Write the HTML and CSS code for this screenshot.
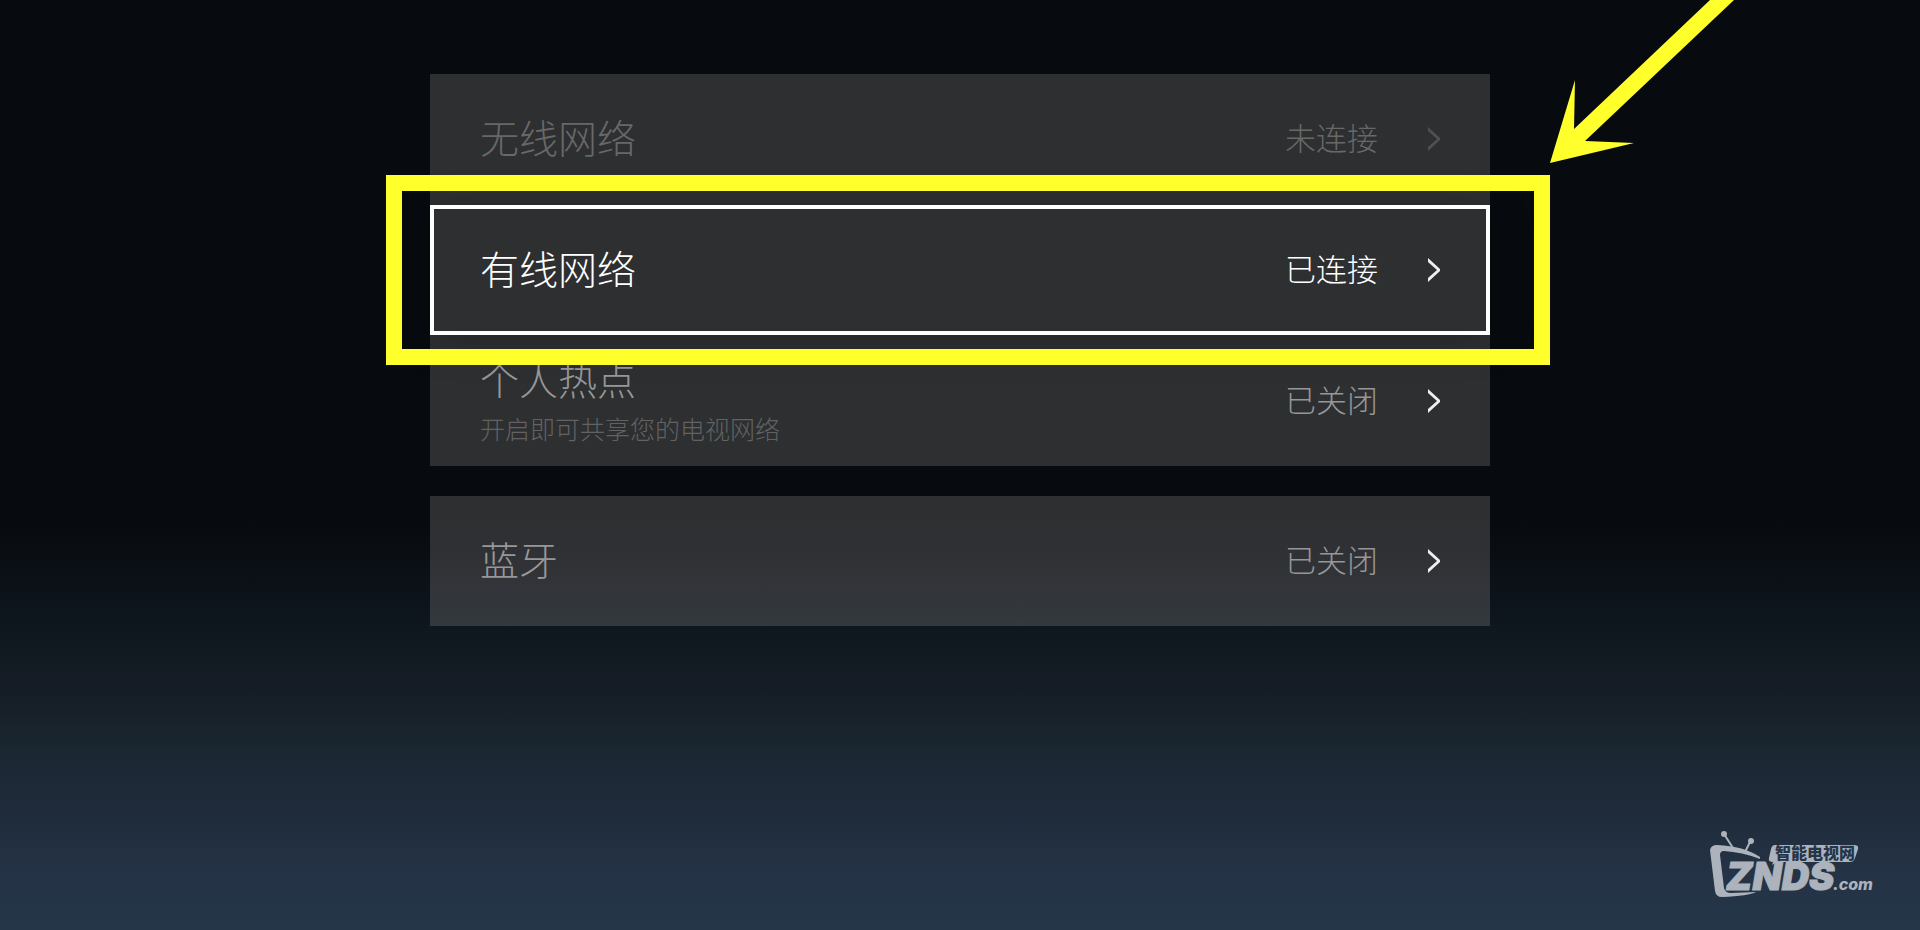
FILE: index.html
```html
<!DOCTYPE html>
<html lang="zh-CN">
<head>
<meta charset="utf-8">
<title>网络设置</title>
<link rel="stylesheet" href="styles.css">
</head>
<body>
<main class="settings">
  <section class="group">
    <button class="row row-disabled" type="button">
      <span class="title">无线网络</span>
      <span class="status">未连接</span>
      <svg class="chevron" viewBox="0 0 12 24" aria-hidden="true"><path d="M0 0L12 11V13L0 24V20L9 12L0 4Z"/></svg>
    </button>
    <button class="row row-focused" type="button">
      <span class="title">有线网络</span>
      <span class="status">已连接</span>
      <svg class="chevron" viewBox="0 0 12 24" aria-hidden="true"><path d="M0 0L12 11V13L0 24V20L9 12L0 4Z"/></svg>
      <span class="callout">
        <svg class="arrow" viewBox="0 0 184 163" aria-hidden="true"><path d="M0 163L25 80L24 129L160 0H184L35 141L84 143Z"/></svg>
      </span>
    </button>
    <button class="row" type="button">
      <span class="label">
        <span class="title">个人热点</span>
        <span class="hint">开启即可共享您的电视网络</span>
      </span>
      <span class="status">已关闭</span>
      <svg class="chevron" viewBox="0 0 12 24" aria-hidden="true"><path d="M0 0L12 11V13L0 24V20L9 12L0 4Z"/></svg>
    </button>
  </section>
  <section class="group">
    <button class="row" type="button">
      <span class="title">蓝牙</span>
      <span class="status">已关闭</span>
      <svg class="chevron" viewBox="0 0 12 24" aria-hidden="true"><path d="M0 0L12 11V13L0 24V20L9 12L0 4Z"/></svg>
    </button>
  </section>
</main>
<svg class="logo" viewBox="0 0 166 70" role="img" aria-label="智能电视网 ZNDS.com">
  <g class="logo-shape">
    <circle cx="14" cy="4" r="3"/>
    <circle cx="41" cy="11" r="3"/>
    <path d="M14 4L23 18M40 12L35 22" class="logo-line"/>
    <path fill-rule="evenodd" d="M0 20Q1 15 7 15Q34 16 50 27V29Q32 22 14 21Q10 21 10 25L14 58Q15 63 21 63L46 62Q39 66 12 67Q6 67 5 61Z"/>
    <path d="M65 15H144Q149 15 148 19L145 28Q144 32 140 32H67L62 35L63 32Q58 32 59 28L61 19Q62 15 65 15Z"/>
  </g>
  <text class="logo-badge" x="65" y="29">智能电视网</text>
  <text class="logo-name" x="16" y="60">ZNDS</text>
  <text class="logo-domain" x="123" y="60">.com</text>
</svg>
</body>
</html>
```
FILE: styles.css
```css
* {
  box-sizing: border-box;
}

body {
  margin: 0;
  min-height: 100vh;
  overflow: hidden;
  position: relative;
  font-family: "Noto Sans CJK SC", sans-serif;
  font-weight: 300;
  background: linear-gradient(#070b0f 0%, #070b0f 56%, #0c1118 63%, #0f181f 68%, #151c25 74%, #1a262f 80%, #1f2b3b 87%, #243345 94%, #253649 100%);
}

.settings {
  width: 1060px;
  max-width: 100%;
  margin: 0 auto;
  padding-top: 74px;
  display: flex;
  flex-direction: column;
  gap: 30px;
}

.group {
  display: flex;
  flex-direction: column;
  gap: 1px;
  background: rgba(255, 245, 238, 0.155);
}

.row {
  display: flex;
  align-items: center;
  width: 100%;
  min-height: 130px;
  padding: 0 50px;
  border: 0;
  background: none;
  color: #979797;
  font: inherit;
  text-align: left;
}

.row-disabled {
  color: #686868;
}

.row-focused {
  position: relative;
  color: #ffffff;
  box-shadow: inset 0 0 0 4px #ffffff, 0 6px 40px rgba(0, 0, 0, 0.2);
}

.label {
  display: flex;
  flex-direction: column;
}

.title {
  padding-bottom: 6px;
  font-size: 39px;
  line-height: 56px;
}

.hint {
  padding-bottom: 8px;
  font-size: 25px;
  line-height: 32px;
  color: #626262;
}

.status {
  margin-left: auto;
  padding-bottom: 4px;
  font-size: 31px;
  line-height: 44px;
}

.chevron {
  width: 12px;
  height: 24px;
  margin-left: 50px;
  fill: #eeeeee;
}

.row-disabled .chevron {
  fill: #505050;
}

.callout {
  position: absolute;
  inset: -30px -60px -30px -44px;
  border: 16px solid #ffff2b;
  pointer-events: none;
}

.arrow {
  position: absolute;
  left: 100%;
  bottom: 100%;
  width: 184px;
  height: 163px;
  margin: 0 0 28px 16px;
  fill: #ffff2b;
}

.logo {
  position: absolute;
  right: 44px;
  bottom: 30px;
  width: 166px;
  height: 70px;
}

.logo-shape {
  fill: #adb3bc;
}

.logo-line {
  fill: none;
  stroke: #adb3bc;
  stroke-width: 2;
}

.logo-badge {
  font-size: 16px;
  font-weight: 900;
  fill: #25364a;
}

.logo-name {
  font-family: Inter, "Liberation Sans", sans-serif;
  font-size: 38px;
  font-weight: 900;
  font-style: italic;
  fill: #adb3bc;
  stroke: #adb3bc;
  stroke-width: 1;
}

.logo-domain {
  font-family: Inter, "Liberation Sans", sans-serif;
  font-size: 16px;
  font-weight: 800;
  font-style: italic;
  fill: #adb3bc;
}
```
